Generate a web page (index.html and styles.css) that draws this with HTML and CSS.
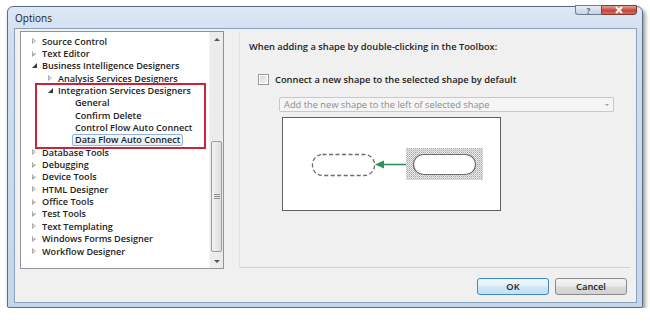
FILE: index.html
```html
<!DOCTYPE html>
<html lang="en">
<head>
    <meta charset="UTF-8">
    <title>Options</title>
    <link rel="stylesheet" href="styles.css">
</head>
<body>
    <div class="window">
        <div class="titlebar">
            <span class="title">Options</span>
            <div class="caption-btns">
                <span class="cap-btn help">?</span>
                <span class="cap-btn close">
                    <svg width="10" height="8" viewBox="0 0 10 8"><path d="M2 1 L8 7 M8 1 L2 7" stroke="#fff" stroke-width="2"/></svg>
                </span>
            </div>
        </div>

        <div class="client">
            <div class="main">
                <div class="tree">
                    <div class="tree-list">
                        <div class="row lvl0"><span class="arrow closed"></span>Source Control</div>
                        <div class="row lvl0"><span class="arrow closed"></span>Text Editor</div>
                        <div class="row lvl0"><span class="arrow open"></span>Business Intelligence Designers</div>
                        <div class="row lvl1"><span class="arrow closed"></span>Analysis Services Designers</div>
                        <div class="group">
                            <div class="row lvl1"><span class="arrow open"></span>Integration Services Designers</div>
                            <div class="row lvl2"><span class="arrow"></span>General</div>
                            <div class="row lvl2"><span class="arrow"></span>Confirm Delete</div>
                            <div class="row lvl2"><span class="arrow"></span>Control Flow Auto Connect</div>
                            <div class="row lvl2"><span class="arrow"></span><span class="selected">Data Flow Auto Connect</span></div>
                        </div>
                        <div class="row lvl0"><span class="arrow closed"></span>Database Tools</div>
                        <div class="row lvl0"><span class="arrow closed"></span>Debugging</div>
                        <div class="row lvl0"><span class="arrow closed"></span>Device Tools</div>
                        <div class="row lvl0"><span class="arrow closed"></span>HTML Designer</div>
                        <div class="row lvl0"><span class="arrow closed"></span>Office Tools</div>
                        <div class="row lvl0"><span class="arrow closed"></span>Test Tools</div>
                        <div class="row lvl0"><span class="arrow closed"></span>Text Templating</div>
                        <div class="row lvl0"><span class="arrow closed"></span>Windows Forms Designer</div>
                        <div class="row lvl0"><span class="arrow closed"></span>Workflow Designer</div>
                    </div>
                    <div class="scrollbar">
                        <span class="sb-arrow up"></span>
                        <div class="sb-track">
                            <div class="sb-thumb"><span class="grip"></span></div>
                        </div>
                        <span class="sb-arrow down"></span>
                    </div>
                </div>

                <div class="page">
                    <p class="heading">When adding a shape by double-clicking in the Toolbox:</p>
                    <label class="check-row"><span class="checkbox"></span>Connect a new shape to the selected shape by default</label>
                    <div class="dropdown">
                        <span>Add the new shape to the left of selected shape</span>
                        <span class="dd-arrow"></span>
                    </div>
                    <div class="preview">
                        <svg width="217" height="92" viewBox="0 0 217 92">
                            <defs>
                                <pattern id="dots" width="2" height="2" patternUnits="userSpaceOnUse">
                                    <rect width="2" height="2" fill="#ececec"/>
                                    <rect width="1" height="1" fill="#a6a6a6"/>
                                    <rect x="1" y="1" width="1" height="1" fill="#c2c2c2"/>
                                </pattern>
                            </defs>
                            <rect x="29.5" y="36.5" width="62" height="21" rx="10" fill="#fff" stroke="#6b6b6b" stroke-width="1.3" stroke-dasharray="4 2.5"/>
                            <rect x="123" y="30" width="77" height="32" fill="url(#dots)"/>
                            <rect x="130.5" y="36.5" width="62" height="20" rx="10" fill="#fff" stroke="#6b6b6b" stroke-width="1.2"/>
                            <path d="M123 46.5 H99" stroke="#2e8f5c" stroke-width="1.6"/>
                            <path d="M92 46.5 L101 42.5 L101 50.5 Z" fill="#2e8f5c"/>
                        </svg>
                    </div>
                </div>
            </div>

            <div class="footer">
                <button class="btn default">OK</button>
                <button class="btn">Cancel</button>
            </div>
        </div>
    </div>
</body>
</html>
```

FILE: styles.css
```css
* {
    margin: 0;
    padding: 0;
    box-sizing: border-box;
}

body {
    background: #fff;
    font-family: 'Open Sans', 'Noto Sans', sans-serif;
    color: #1e1e1e;
}

.window {
    position: relative;
    width: 636px;
    height: 302px;
    margin: 6px 0 0 7px;
    padding: 0 5px 4px 6px;
    border: 1px solid #5a6f86;
    border-radius: 6px 6px 2px 2px;
    background: linear-gradient(180deg, #dde8f3 0%, #cfdff0 10%, #c3d7ec 100%);
    box-shadow: 2px 3px 4px rgba(60, 50, 30, 0.55);
}

.titlebar {
    height: 21px;
    display: flex;
    align-items: center;
}

.title {
    font-size: 10px;
    padding-left: 1px;
    color: #1b1b1b;
}

.caption-btns {
    position: absolute;
    top: -2px;
    right: 5px;
    display: flex;
    height: 10px;
}

.cap-btn {
    display: flex;
    align-items: center;
    justify-content: center;
    height: 100%;
    border: 1px solid #6d7f94;
    font-size: 8px;
    font-weight: bold;
}

.help {
    width: 26px;
    border-radius: 0 0 0 3px;
    background: linear-gradient(180deg, #e6eef6, #c4d3e3);
    color: #56687c;
    border-right: none;
}

.close {
    width: 36px;
    border-radius: 0 0 3px 0;
    background: linear-gradient(180deg, #e0a59a, #c7463a 55%, #d4685a);
    border-color: #7e3a33;
}

.client {
    height: 275px;
    display: flex;
    flex-direction: column;
    background: #f0f0f0;
    border: 1px solid #8ba2ba;
    padding: 2px 0 0 5px;
}

.main {
    display: flex;
    height: 238px;
}

.tree {
    width: 204px;
    height: 238px;
    display: flex;
    background: #fff;
    border: 1px solid #8d9399;
}

.tree-list {
    flex: 1;
    padding-top: 3px;
    font-size: 9.1px;
    font-weight: 600;
    color: #222;
}

.row {
    height: 12.35px;
    display: flex;
    align-items: center;
    white-space: nowrap;
}

.lvl0 { padding-left: 10px; }
.lvl1 { padding-left: 26px; }
.lvl2 { padding-left: 43px; }

.arrow {
    width: 11px;
    height: 8px;
    flex: none;
    position: relative;
}

.arrow.closed::before {
    content: '';
    position: absolute;
    left: 1px;
    top: 1px;
    border-left: 4px solid #a7a7a7;
    border-top: 3px solid transparent;
    border-bottom: 3px solid transparent;
}

.arrow.closed::after {
    content: '';
    position: absolute;
    left: 2px;
    top: 2.5px;
    border-left: 2px solid #fff;
    border-top: 1.5px solid transparent;
    border-bottom: 1.5px solid transparent;
}

.arrow.open::before {
    content: '';
    position: absolute;
    left: 1px;
    top: 1px;
    border-right: 5px solid #3a3a3a;
    border-top: 5px solid transparent;
}

.group {
    position: relative;
}

.group::before {
    content: '';
    position: absolute;
    left: 14px;
    right: 3px;
    top: -1px;
    bottom: -3px;
    border: 2px solid #c9253a;
}

.selected {
    padding: 0 2px;
    margin-left: -3px;
    border: 1px solid #8fb3dc;
    border-radius: 2px;
    background: linear-gradient(180deg, #f4f9fe, #e3effb);
    line-height: 10.5px;
}

.scrollbar {
    width: 14px;
    display: flex;
    flex-direction: column;
    background: #ececec;
    border-left: 1px solid #f5f5f5;
}

.sb-arrow {
    height: 14px;
    display: flex;
    align-items: center;
    justify-content: center;
}

.sb-arrow::before {
    content: '';
    border-left: 3px solid transparent;
    border-right: 3px solid transparent;
}

.sb-arrow.up::before { border-bottom: 3px solid #555; }
.sb-arrow.down::before { border-top: 3px solid #555; }

.sb-track {
    flex: 1;
    display: flex;
    flex-direction: column;
    justify-content: flex-end;
    padding: 0 1px 2px 1px;
}

.sb-thumb {
    height: 111px;
    border: 1px solid #9c9c9c;
    border-radius: 2px;
    background: linear-gradient(90deg, #f3f3f3, #dedede);
    display: flex;
    align-items: center;
    justify-content: center;
}

.grip {
    width: 6px;
    height: 6px;
    background: repeating-linear-gradient(180deg, #8e8e8e 0 1px, transparent 1px 2px);
}

.page {
    flex: 1;
    margin-left: 15px;
    margin-right: 6px;
    height: 237px;
    border-left: 1px solid #e2e2e2;
    border-bottom: 1px solid #d0d0d0;
    padding-left: 9px;
    font-size: 9.3px;
    font-weight: 600;
    color: #222;
}

.heading {
    margin-top: 10px;
    line-height: 12px;
}

.check-row {
    display: flex;
    align-items: center;
    gap: 6px;
    margin-top: 20px;
    margin-left: 9px;
    height: 12px;
}

.checkbox {
    width: 11px;
    height: 11px;
    border: 1px solid #9a9a9a;
    background: linear-gradient(135deg, #d8d8d8, #f6f6f6);
    box-shadow: inset 0 0 0 1px #fff;
}

.dropdown {
    display: flex;
    align-items: center;
    justify-content: space-between;
    margin: 12px 16px 0 30px;
    height: 15px;
    padding: 0 4px;
    border: 1px solid #c8c8c8;
    border-radius: 2px;
    background: #f5f5f5;
    color: #8c8c8c;
    font-weight: 400;
}

.dd-arrow {
    border-left: 2.5px solid transparent;
    border-right: 2.5px solid transparent;
    border-top: 2.5px solid #a0a0a0;
}

.preview {
    margin: 5px 0 0 33px;
    width: 219px;
    height: 94px;
    border: 1px solid #5f5f5f;
    background: #fff;
}

.preview svg {
    display: block;
}

.footer {
    display: flex;
    justify-content: flex-end;
    gap: 6px;
    padding: 9px 9px 0 0;
}

.btn {
    width: 72px;
    height: 17px;
    font-family: inherit;
    font-size: 9.3px;
    font-weight: 600;
    color: #222;
    border: 1px solid #8a8a8a;
    border-radius: 3px;
    background: linear-gradient(180deg, #f4f4f4 0%, #ebebeb 45%, #dadada 55%, #d2d2d2 100%);
}

.btn.default {
    border-color: #3f89c0;
    background: linear-gradient(180deg, #eef7fc 0%, #e0f0fa 45%, #cde7f7 55%, #c3e0f4 100%);
}
```
